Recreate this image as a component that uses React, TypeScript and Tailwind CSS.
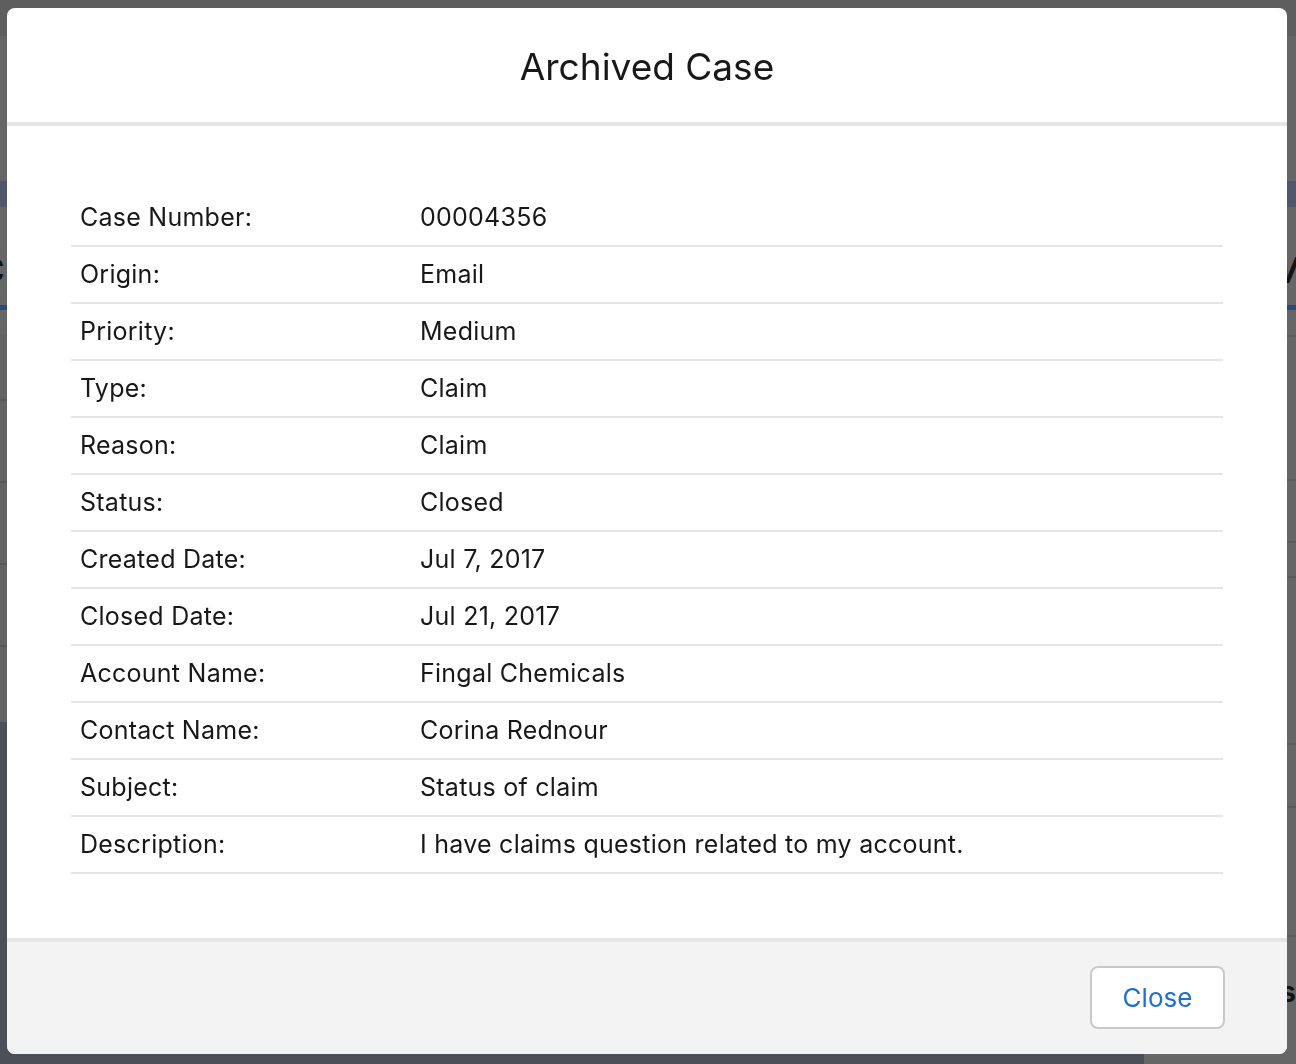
import React from 'react';

const caseFields: [string, string][] = [
  ['Case Number:', '00004356'],
  ['Origin:', 'Email'],
  ['Priority:', 'Medium'],
  ['Type:', 'Claim'],
  ['Reason:', 'Claim'],
  ['Status:', 'Closed'],
  ['Created Date:', 'Jul 7, 2017'],
  ['Closed Date:', 'Jul 21, 2017'],
  ['Account Name:', 'Fingal Chemicals'],
  ['Contact Name:', 'Corina Rednour'],
  ['Subject:', 'Status of claim'],
  ['Description:', 'I have claims question related to my account.'],
];

// the page behind the modal, already dimmed by the backdrop
const BackgroundPage = () => {
  return (
    <div className="w-[1296px] h-[1064px] overflow-hidden bg-[#666666] flex flex-col" style={{ fontFamily: 'Inter, "Noto Sans", sans-serif' }}>
      <div className="h-[36px] bg-[#5e5e5e] shrink-0"></div>
      <div className="h-[145px] shrink-0 pt-[36px]">
        <span className="block -ml-[20px] text-[30px] leading-[30px] text-[#1a1a1a]">o</span>
      </div>
      <div className="h-[26px] bg-[#50576a] shrink-0"></div>
      <div className="h-[98px] shrink-0 flex items-start justify-between pt-[48px]">
        <span className="-ml-[22px] text-[36px] leading-[30px] font-bold text-[#141414]">C</span>
        <span className="-mr-[18px] text-[36px] leading-[30px] font-bold italic text-[#141414]">W</span>
      </div>
      <div className="h-[5px] bg-[#2b4a7c] shrink-0"></div>
      <div className="flex-1 flex">
        <div className="w-[1162px] flex flex-col">
          <div className="h-[25px]"></div>
          <div className="h-[387px] bg-[#636363] flex flex-col">
            <div className="h-[66px] border-b-2 border-[#575757]"></div>
            <div className="h-[82px] border-b-2 border-[#575757]"></div>
            <div className="h-[82px] border-b-2 border-[#575757]"></div>
            <div className="h-[82px] border-b-2 border-[#575757]"></div>
          </div>
          <div className="flex-1 bg-[#4b5058]"></div>
        </div>
        <div className="flex-1 flex flex-col text-[28px] leading-[30px] text-[#141414]">
          <div className="h-[27px] border-b-2 border-[#5a5a5a]"></div>
          <div className="h-[144px] border-b-2 border-[#5a5a5a] pt-[42px] pl-[116px]">
            <div className="w-[20px] h-[3px] bg-[#2b4a7c]"></div>
          </div>
          <div className="h-[62px] border-b-2 border-[#5a5a5a]"></div>
          <div className="h-[35px] border-b-2 border-[#5a5a5a]"></div>
          <div className="h-[167px] border-b-2 border-[#5a5a5a]"></div>
          <div className="h-[63px] border-b-2 border-[#5a5a5a] flex items-center pl-[118px] font-bold">o</div>
          <div className="h-[129px] border-b-2 border-[#5a5a5a] pt-[64px] pl-[120px]">t</div>
          <div className="pt-[40px] pl-[120px] font-bold">as</div>
        </div>
      </div>
    </div>
  );
};

const ArchivedCaseModal = () => {
  return (
    <div className="fixed inset-0 pt-[8px] pl-[7px]" style={{ fontFamily: 'Inter, "Noto Sans", sans-serif' }}>
      <div className="w-[1280px] h-[1046px] bg-white rounded-[8px] overflow-hidden flex flex-col">
        <div className="h-[118px] shrink-0 flex items-center justify-center border-b-4 border-[#e5e5e5]">
          <h2 className="text-[37px] leading-none text-[#181818] pt-[2px]">Archived Case</h2>
        </div>
        <div className="h-[812px] shrink-0 p-[64px]">
          <div className="flex flex-col">
            {caseFields.map(([label, value]) => (
              <div key={label} className="grid grid-cols-[340px_1fr] h-[57px] items-center border-b-2 border-[#e5e5e5] text-[25px] tracking-[0.25px] text-[#181818]">
                <div className="pl-[9px]">{label}</div>
                <div className="pl-[9px]">{value}</div>
              </div>
            ))}
          </div>
        </div>
        <div className="flex-1 border-t-4 border-[#e5e5e5] bg-[#f3f3f3] flex justify-end items-start pt-[24px] pr-[62px]">
          <button className="w-[135px] h-[63px] bg-white border-2 border-[#c9c9c9] rounded-[8px] text-[26px] text-[#1f6fd1]">
            Close
          </button>
        </div>
      </div>
    </div>
  );
};

export default function App() {
  return (
    <div className="relative w-[1296px] h-[1064px] overflow-hidden">
      <BackgroundPage />
      <ArchivedCaseModal />
    </div>
  );
}
